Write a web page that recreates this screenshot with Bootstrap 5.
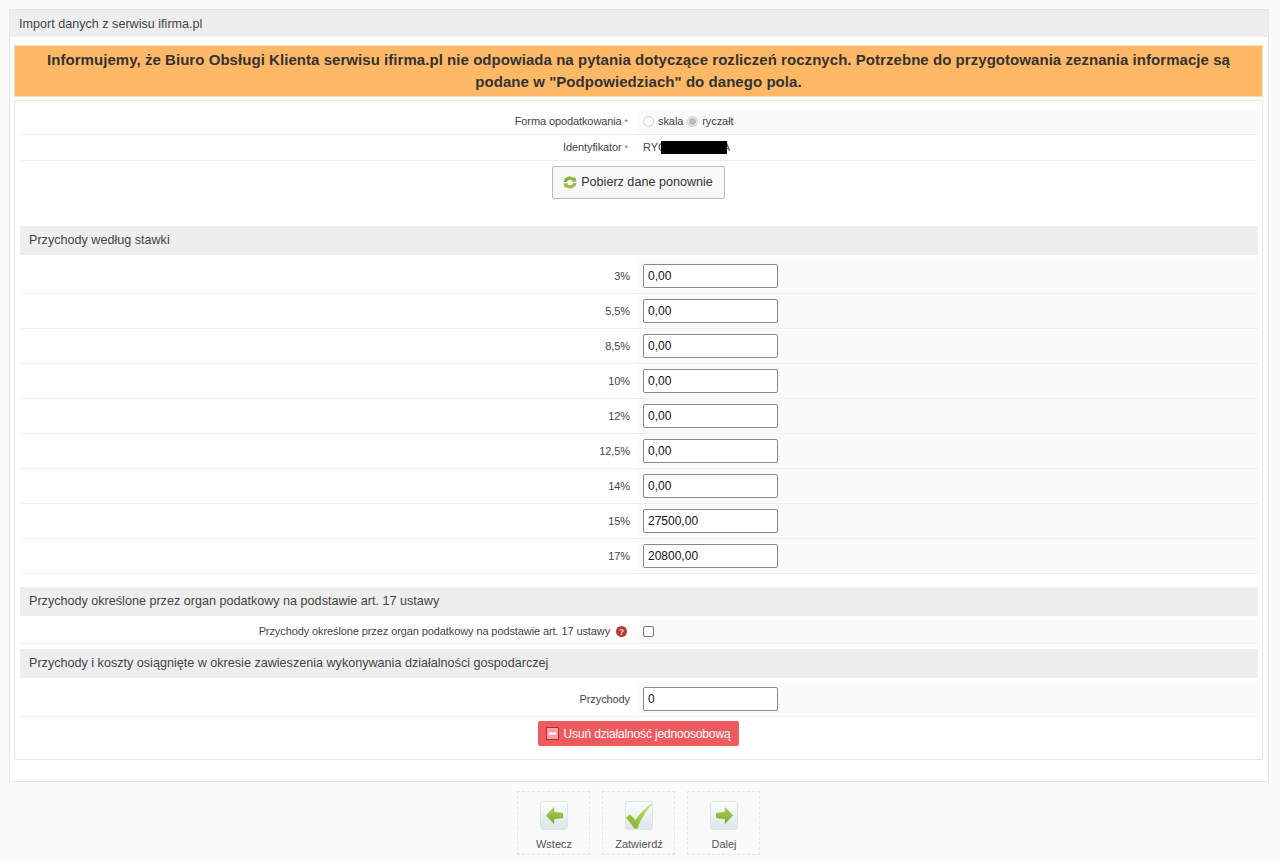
<!DOCTYPE html>
<html lang="pl">
<head>
<meta charset="utf-8">
<title>Import danych</title>
<link href="https://cdn.jsdelivr.net/npm/bootstrap@5.3.0/dist/css/bootstrap.min.css" rel="stylesheet">
<style>
html,body{height:861px;overflow:hidden}
body{background:#fbfbfb;font-family:"Liberation Sans",Arial,sans-serif;font-size:11px;color:#444;padding:9px 11px 0 9px}
.outer-panel{background:#fff;border:1px solid #e6e6e6;height:773px;padding:0 5px 0 4px}
.outer-head{background:#eee;height:27px;line-height:28px;font-size:12.6px;padding-left:9px;margin:0 -5px 8px -4px;color:#444}
.notice{background:#ffb966;border:1px solid #f5dcbc;height:52px;font-size:15px;letter-spacing:.05px;font-weight:700;line-height:22px;color:#333;text-align:center;padding:3px 20px 0;margin-bottom:3px}
.inner-box{border:1px solid #e6e6e6;height:660px;padding:8px 4px 0 5px;border-radius:1px}
.form-line{display:flex;border-bottom:1px solid #eee}
.lab{width:619px;text-align:right;flex:none;letter-spacing:-.1px}
.val{flex:1;background:#fafafa;display:flex;align-items:center;letter-spacing:-.08px}
.line-a{height:26px}
.line-a .lab{line-height:24px;padding-right:11px}
.line-a .val{padding-left:4px;color:#444}
.line-b{height:26px}
.line-b .val{background:#fff;padding-left:4px;position:relative;font-size:11px}
.line-b .lab{line-height:24px;padding-right:11px}
.req{color:#c9483f;font-size:9px}
.rate{height:35px;margin-top:0}
.rate .lab{line-height:35px;padding-right:9px}
.rate .val{padding-left:4px;align-items:flex-start;padding-top:5px}
.amt{width:135px;height:24px;border:1px solid #888;border-radius:2px;background:#fff;font:12px "Liberation Sans",Arial,sans-serif;padding:0 4px;color:#111;display:block}
.fake-radio{width:11px;height:11px;border-radius:50%;border:1px solid #ccc;background:#fff;display:inline-block;margin-right:4px;flex:none}
.fake-radio.on{background:radial-gradient(circle,#bbb 0 3px,#eee 4px)}
.radio-text{margin-right:4px}
.mask{position:absolute;left:22px;top:6px;width:66px;height:13px;background:#000}
.tail-char{margin-left:57px}
.refetch-wrap{height:65px;padding:5px 2px 0 0;display:flex;justify-content:center}
.refetch{width:173px;height:33px;background:#f8f8f8;border:1px solid #bbb;border-radius:2px;font-size:12.6px;color:#333;padding:0;display:flex;align-items:center;justify-content:center;gap:4px}
.refetch:hover{background:#f8f8f8;border-color:#bbb;color:#333}
.sect{background:#eee;height:29px;line-height:28px;font-size:12.6px;padding-left:9px;color:#444}
.sp-top-a{height:4px}
.sp-top-b{height:13px}
.sp-top-c{height:5px}
.chk-line{height:24px}
.chk-line .lab{line-height:22px;padding-right:12px}
.chk-line .val{padding-left:4px}
.fake-check{width:11px;height:11px;border:1px solid #777;border-radius:2px;background:#fff;margin:0;display:block;appearance:none}
.help-dot{display:inline-block;vertical-align:-2px;margin-left:3px}
.del-wrap{display:flex;justify-content:center;padding:4px 2px 0 0}
.del-btn{width:201px;height:25px;background:#ef5a5f;color:#fff;border:0;border-radius:2px;font-size:12px;letter-spacing:-.16px;padding:0;display:flex;align-items:center;justify-content:center;gap:5px}
.del-btn:hover{background:#ef5a5f;color:#fff}
.foot-bar{display:flex;justify-content:center;gap:12px;margin:9px 2px 0 0}
.foot-btn{width:73px;height:64px;border:1px dashed #e6e6e6;background:#f9f9f9;display:flex;flex-direction:column;align-items:center;padding:9px 0 0 2px;font-size:11px;color:#555}
.foot-ic{width:28px;height:29px;border:1px solid #dce5e5;border-radius:3px;background:linear-gradient(#fbfdfd,#dbe7e7);display:flex;align-items:center;justify-content:center;margin-bottom:6px}
</style>
</head>
<body>
<svg width="0" height="0" class="position-absolute"><defs><linearGradient id="lime" x1="0" y1="0" x2="0" y2="1"><stop offset="0" stop-color="#a6cf4f"/><stop offset="1" stop-color="#7fa92d"/></linearGradient><linearGradient id="limeTick" x1="1" y1="0" x2="0" y2="1"><stop offset="0" stop-color="#cfe596"/><stop offset=".5" stop-color="#a3c94a"/><stop offset="1" stop-color="#80aa2e"/></linearGradient></defs></svg>
<div class="outer-panel">
  <div class="outer-head">Import danych z serwisu ifirma.pl</div>
  <div class="notice">Informujemy, że Biuro Obsługi Klienta serwisu ifirma.pl nie odpowiada na pytania dotyczące rozliczeń rocznych. Potrzebne do przygotowania zeznania informacje są podane w "Podpowiedziach" do danego pola.</div>
  <div class="inner-box">
    <div class="form-line line-a">
      <div class="lab">Forma opodatkowania <span class="req">*</span></div>
      <div class="val"><span class="fake-radio"></span><span class="radio-text">skala</span><span class="fake-radio on"></span><span>ryczałt</span></div>
    </div>
    <div class="form-line line-b">
      <div class="lab">Identyfikator <span class="req">*</span></div>
      <div class="val">RYC<span class="tail-char">A</span><span class="mask"></span></div>
    </div>
    <div class="refetch-wrap">
      <button type="button" class="btn refetch">
        <svg width="14" height="13" viewBox="0 0 14 13"><path d="M.5 6C1 2.500 4 .3 7.300.6c1.300.1 2.400.6 3.200 1.400L12 .8 13.500 5.500 8.500 5.700l1-1.300C8.800 3.900 8 3.700 7.200 3.700 5.700 3.700 4.400 4.600 4 6z" fill="#86b335"/><path d="M13.500 7c-.5 3.500-3.500 5.700-6.800 5.400-1.300-.1-2.400-.6-3.200-1.400L2 12.200.5 7.500l5-.2-1 1.300c.7.500 1.500.7 2.300.7C8.300 9.300 9.600 8.400 10 7z" fill="#96c043"/></svg>
        Pobierz dane ponownie
      </button>
    </div>
    <div class="sect">Przychody według stawki</div>
    <div class="sp-top-a"></div>
    <div class="form-line rate"><div class="lab">3%</div><div class="val"><input class="amt" value="0,00"></div></div>
    <div class="form-line rate"><div class="lab">5,5%</div><div class="val"><input class="amt" value="0,00"></div></div>
    <div class="form-line rate"><div class="lab">8,5%</div><div class="val"><input class="amt" value="0,00"></div></div>
    <div class="form-line rate"><div class="lab">10%</div><div class="val"><input class="amt" value="0,00"></div></div>
    <div class="form-line rate"><div class="lab">12%</div><div class="val"><input class="amt" value="0,00"></div></div>
    <div class="form-line rate"><div class="lab">12,5%</div><div class="val"><input class="amt" value="0,00"></div></div>
    <div class="form-line rate"><div class="lab">14%</div><div class="val"><input class="amt" value="0,00"></div></div>
    <div class="form-line rate"><div class="lab">15%</div><div class="val"><input class="amt" value="27500,00"></div></div>
    <div class="form-line rate"><div class="lab">17%</div><div class="val"><input class="amt" value="20800,00"></div></div>
    <div class="sp-top-b"></div>
    <div class="sect">Przychody określone przez organ podatkowy na podstawie art. 17 ustawy</div>
    <div class="sp-top-a"></div>
    <div class="form-line chk-line">
      <div class="lab">Przychody określone przez organ podatkowy na podstawie art. 17 ustawy
        <svg class="help-dot" width="11" height="11" viewBox="0 0 11 11"><circle cx="5.500" cy="5.500" r="5.500" fill="#b8383c"/><text x="5.500" y="8.500" text-anchor="middle" font-family="Liberation Sans" font-size="8.500" font-weight="700" fill="#f6d9d9">?</text></svg>
      </div>
      <div class="val"><input type="checkbox" class="fake-check"></div>
    </div>
    <div class="sp-top-c"></div>
    <div class="sect">Przychody i koszty osiągnięte w okresie zawieszenia wykonywania działalności gospodarczej</div>
    <div class="sp-top-a"></div>
    <div class="form-line rate"><div class="lab">Przychody</div><div class="val"><input class="amt" value="0"></div></div>
    <div class="del-wrap">
      <button type="button" class="btn del-btn">
        <svg width="13" height="13" viewBox="0 0 13 13"><rect x=".5" y=".5" width="12" height="12" fill="#f9a0a2" stroke="#b72a2f"/><rect x="3" y="5.500" width="7" height="2" fill="#fff"/></svg>
        Usuń działalność jednoosobową
      </button>
    </div>
  </div>
</div>
<div class="foot-bar">
  <div class="foot-btn">
    <div class="foot-ic"><svg width="17" height="17" viewBox="0 0 17 17"><path d="M0 8.500 8 0c.3 1.500.3 3 .1 4.700L17 6v5l-8.900 1.300c.2 1.700.2 3.200-.1 4.700z" fill="url(#lime)"/></svg></div>
    Wstecz
  </div>
  <div class="foot-btn">
    <div class="foot-ic"><svg width="26" height="26" viewBox="0 0 26 26"><path d="M0 14.500 4 11.500 9.500 17C13.500 11 19 5 25.500.5L26 1.500C20 8 15 15.500 11.500 25.500H8.500z" fill="url(#limeTick)"/></svg></div>
    Zatwierdź
  </div>
  <div class="foot-btn">
    <div class="foot-ic"><svg width="17" height="17" viewBox="0 0 17 17"><path d="M17 8.500 9 0c-.3 1.500-.3 3-.1 4.700L0 6v5l8.900 1.300c-.2 1.700-.2 3.200.1 4.700z" fill="url(#lime)"/></svg></div>
    Dalej
  </div>
</div>
</body>
</html>
